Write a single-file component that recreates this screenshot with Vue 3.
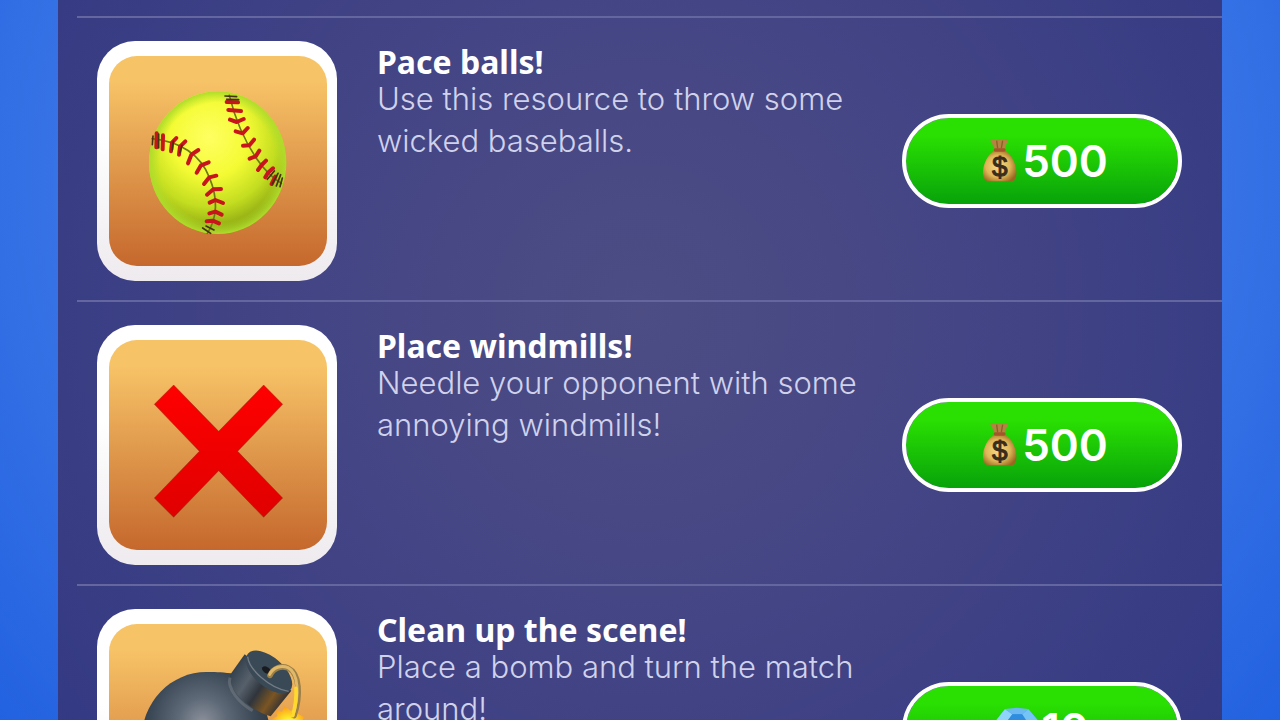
<template>
  <main class="shop">
    <section class="panel">
      <ul class="items">
        <li v-for="item in items" :key="item.id" class="item">
          <div class="frame">
            <div class="tile">
              <svg v-if="item.icon === 'ball'" viewBox="57 78 654 630" aria-hidden="true">
                <defs>
                  <radialGradient id="ballBase" cx="0.44" cy="0.32" r="0.7">
                    <stop offset="0" stop-color="#ffff62" />
                    <stop offset="0.4" stop-color="#f4fb34" />
                    <stop offset="0.7" stop-color="#c3dd20" />
                    <stop offset="1" stop-color="#7d980e" />
                  </radialGradient>
                  <radialGradient id="ballRim">
                    <stop offset="0.84" stop-color="#b4e22c" stop-opacity="0" />
                    <stop offset="1" stop-color="#b0dc2c" />
                  </radialGradient>
                </defs>
                <ellipse cx="383" cy="398" rx="206" ry="214" fill="url(#ballBase)" />
                <ellipse cx="383" cy="398" rx="206" ry="214" fill="url(#ballRim)" />
                <g fill="none" stroke-linecap="round" stroke-linejoin="round">
                  <path d="M186 326C270 335 330 372 358 442C382 500 384 560 352 610" stroke="#6b7a12" stroke-width="5" />
                  <path d="M418 196C436 270 462 330 500 386C522 418 548 444 574 460" stroke="#6b7a12" stroke-width="5" />
                  <path
                    d="M200 310L199 352M219 316L218 358M259 324L246 338L243 364M286 334L270 350L267 374M325 360L304 374L294 400M356 397L333 406L320 428M379 437L358 442L342 462M393 477L370 478L351 494M399 519L376 510L359 518M395 554L376 545L358 550M387 580L368 572L350 574"
                    stroke="#c8141c" stroke-width="12" />
                  <path
                    d="M410 216L444 217M415 240L453 243M420 269L440 276L461 267M437 304L458 310L473 294M459 347L478 346L492 329M479 386L497 379L508 362M504 420L515 405L528 392M526 442L534 428L549 415M545 462L556 440"
                    stroke="#c8141c" stroke-width="12" />
                  <path
                    d="M189 318L187 344M206 312L206 354M348 588L372 600M338 594L362 610M405 198L440 200M410 208L446 209M532 448L553 423M547 462L564 430M559 468L572 434M570 470L577 444M250 334L247 360M276 346L270 368"
                    stroke="#46320f" stroke-width="5" />
                </g>
              </svg>
              <svg v-else-if="item.icon === 'cross'" viewBox="57 60 654 630" aria-hidden="true">
                <defs>
                  <linearGradient id="crossFill" x2="0" y2="1">
                    <stop offset="0" stop-color="#ff0000" />
                    <stop offset="1" stop-color="#e00000" />
                  </linearGradient>
                </defs>
                <path
                  d="M251 195L386 334L521 195L578 253L443 394L578 534L521 592L386 452L251 592L193 534L328 394L193 253Z"
                  fill="url(#crossFill)" stroke="#8d3216" stroke-opacity="0.45" stroke-width="3" />
              </svg>
              <svg v-else viewBox="57 75 654 630" aria-hidden="true">
                <defs>
                  <radialGradient id="bombBody" cx="0.47" cy="0.38" r="0.62">
                    <stop offset="0" stop-color="#8d929d" />
                    <stop offset="0.3" stop-color="#5f6a78" />
                    <stop offset="0.65" stop-color="#3b4855" />
                    <stop offset="1" stop-color="#27313b" />
                  </radialGradient>
                  <linearGradient id="bombNeck" x1="430" y1="210" x2="580" y2="310" gradientUnits="userSpaceOnUse">
                    <stop offset="0" stop-color="#33404c" />
                    <stop offset="0.3" stop-color="#56606b" />
                    <stop offset="0.55" stop-color="#30353c" />
                    <stop offset="0.8" stop-color="#7b5523" />
                    <stop offset="1" stop-color="#353334" />
                  </linearGradient>
                  <radialGradient id="spark">
                    <stop offset="0" stop-color="#fffbd0" />
                    <stop offset="0.4" stop-color="#ffe92b" />
                    <stop offset="1" stop-color="#ff9d18" />
                  </radialGradient>
                </defs>
                <path
                  d="M584 322L602 335L618 326L624 344L642 354L634 374L652 404L622 402L608 436L594 406L556 418L568 384L540 362L562 352L558 334L576 338Z"
                  fill="url(#spark)" />
                <path d="M423 223C390 219 372 219 349 219A194 202 0 1 0 543 421C543 392 537 366 528 340Z" fill="url(#bombBody)" />
                <path d="M464 166L422 225C406 262 470 330 542 352L604 275Z" fill="url(#bombNeck)" />
                <path d="M420 236C410 268 448 312 488 335" fill="none" stroke="#7e848b" stroke-opacity="0.45" stroke-width="9" />
                <ellipse cx="537" cy="219" rx="84" ry="44" transform="rotate(41 537 219)" fill="#3a4956" />
                <path d="M473 173C476 210 538 268 596 277" fill="none" stroke="#727b84" stroke-width="4" />
                <ellipse cx="529" cy="213" rx="14" ry="9" transform="rotate(35 529 213)" fill="#181c20" />
                <path d="M540 229C550 207 574 198 594 207C630 224 632 290 612 350" fill="none" stroke="#9c8048" stroke-width="17" stroke-linecap="round" />
                <path d="M539 226C549 205 574 197 594 206C626 222 628 288 609 349" fill="none" stroke="#dfb86a" stroke-width="9" stroke-linecap="round" />
                <path d="M618 268C620 300 614 330 608 350" fill="none" stroke="#ffd92e" stroke-width="11" stroke-linecap="round" />
              </svg>
            </div>
          </div>

          <div class="info">
            <h2 class="title">{{ item.title }}</h2>
            <p class="text">{{ item.text }}</p>
          </div>

          <button type="button" class="buy">
            <svg v-if="item.currency === 'coins'" class="currency" viewBox="0 0 132 132" role="img" aria-label="coins">
              <defs>
                <radialGradient id="bag" cx="0.45" cy="0.5" r="0.6">
                  <stop offset="0" stop-color="#f6dc88" />
                  <stop offset="0.6" stop-color="#dfb658" />
                  <stop offset="1" stop-color="#9a6720" />
                </radialGradient>
              </defs>
              <path d="M54 36C36 48 23 70 21 96C20 114 25 125 37 127H107C118 127 122 114 121 96C119 70 106 48 88 36Z" fill="url(#bag)" />
              <path d="M56 30C52 18 44 9 43 2C50 -2 56 4 61 2C67 -2 74 0 78 2C84 -2 92 1 97 1C95 10 88 19 85 30Z" fill="#b48542" />
              <path d="M62 5L65 28M80 5L76 28" stroke="#8a6026" stroke-width="4" />
              <rect x="53" y="28" width="36" height="10" rx="5" fill="#a4562b" />
              <text x="71" y="111" class="dollar">$</text>
            </svg>
            <svg v-else class="currency" viewBox="0 0 132 132" role="img" aria-label="gems">
              <path d="M30 6L100 6L132 44L66 126L0 44Z" fill="#3c9fe8" />
              <path d="M30 6L52 22L34 46L0 44Z" fill="#8fd4fb" />
              <path d="M30 6L66 2L100 6L82 22L52 22Z" fill="#6cb9ef" />
              <path d="M52 22H82L98 46H34Z" fill="#2f8ddf" />
              <path d="M100 6L132 44L98 46L82 22Z" fill="#76c4f6" />
              <path d="M34 46H98L66 126Z" fill="#58b6f2" />
            </svg>
            <span>{{ item.price }}</span>
          </button>
        </li>
      </ul>
    </section>
  </main>
</template>

<script setup>
const items = [
  {
    id: 1,
    icon: 'ball',
    title: 'Pace balls!',
    text: 'Use this resource to throw some wicked baseballs.',
    currency: 'coins',
    price: 500
  },
  {
    id: 2,
    icon: 'cross',
    title: 'Place windmills!',
    text: 'Needle your opponent with some annoying windmills!',
    currency: 'coins',
    price: 500
  },
  {
    id: 3,
    icon: 'bomb',
    title: 'Clean up the scene!',
    text: 'Place a bomb and turn the match around!',
    currency: 'gems',
    price: 10
  }
]
</script>

<style>
body {
  margin: 0;
  background: #2563e2;
}
</style>

<style scoped>
.shop {
  box-sizing: border-box;
  height: 100vh;
  overflow: hidden;
  padding: 0 58px;
  background: radial-gradient(circle at 50% 25%, #6a93e6 0%, #3f7ae8 58%, #2261e0 100%);
}
.panel {
  box-sizing: border-box;
  min-height: 100%;
  padding: 16px 0 0 19px;
  background: radial-gradient(circle at 50% 36%, #4d4d84 0%, #444585 40%, #333983 90%);
}
.items {
  list-style: none;
  margin: 0;
  padding: 0;
}
.item {
  display: flex;
  align-items: center;
  border-top: 2px solid #6466a0;
  padding: 23px 40px 19px 20px;
}
.frame {
  box-sizing: border-box;
  flex: none;
  width: 240px;
  height: 240px;
  padding: 15px 10px 15px 12px;
  border-radius: 38px;
  background: linear-gradient(#ffffff 40%, #eeeaee);
}
.tile {
  height: 100%;
  border-radius: 28px;
  overflow: hidden;
  background: linear-gradient(#f7c367 12%, #c5682d);
}
.tile svg {
  display: block;
  width: 100%;
  height: 100%;
}
.info {
  flex: 1;
  align-self: flex-start;
  padding: 5px 32px 0 40px;
  color: #ffffff;
}
.title {
  margin: 0;
  font: 700 32px/32px "Noto Sans", sans-serif;
}
.text {
  margin: 0;
  font: 300 31px/42px Inter, sans-serif;
  color: #d0d2ec;
}
.buy {
  box-sizing: border-box;
  flex: none;
  display: flex;
  align-items: center;
  justify-content: center;
  gap: 2px;
  width: 280px;
  height: 94px;
  padding: 0;
  border: 4px solid #ffffff;
  border-radius: 47px;
  background: linear-gradient(#2ae002 20%, #08a20a) padding-box;
  color: #ffffff;
  font: 600 44px/52px Inter, sans-serif;
  cursor: pointer;
}
.buy:hover {
  filter: brightness(1.06);
}
.currency {
  flex: none;
  width: 44px;
  height: 44px;
  overflow: visible;
}
.dollar {
  font: 400 84px "Liberation Sans", sans-serif;
  text-anchor: middle;
  fill: #3a2c1c;
  stroke: #3a2c1c;
  stroke-width: 3;
}
</style>
